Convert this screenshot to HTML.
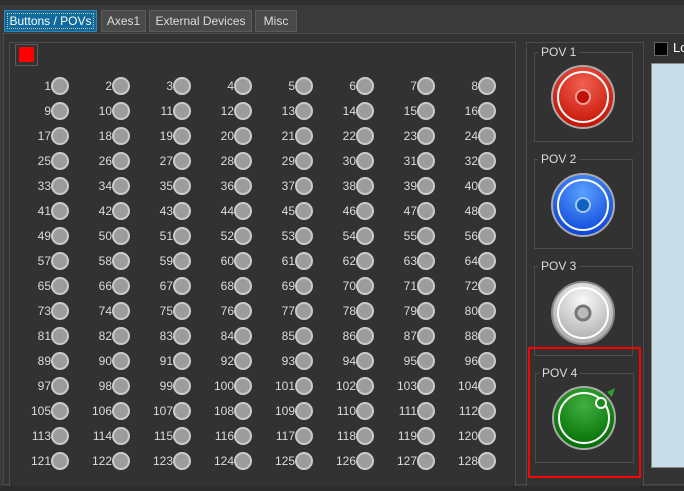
<!DOCTYPE html>
<html><head><style>
body{margin:0;width:684px;height:491px;background:#3a3a3a;overflow:hidden;font-family:"Liberation Sans",sans-serif;font-size:12px;color:#dcdcdc;position:relative}
.a{position:absolute;box-sizing:border-box}
.tab{position:absolute;top:10px;height:22px;background:#4a4a4a;border:1px solid #5a5a5a;color:#ddd;font-size:12px;line-height:20px;text-align:center;box-sizing:border-box;white-space:nowrap}
.grid{position:absolute;left:8px;top:73px;display:grid;grid-template-columns:repeat(8,61px);grid-auto-rows:25px}
.grid span{display:flex;justify-content:flex-end;align-items:center;height:25px}
.grid span:after{content:"";width:14px;height:14px;border-radius:50%;background:#9c9c9c;border:2px solid #cbcbcb}
.pl{position:absolute;font-size:12px;color:#ddd;background:#323232;padding:0 3px}
</style></head><body>
<div class="a" style="left:0;top:0;width:684px;height:5px;background:#2e2e2e"></div>
<div class="tab" style="left:4px;width:93px;background:#0f6aa0;border-color:#2a86c0;color:#fff"><span style="outline:1px dotted #e0c080;padding:0 1px">Buttons / POVs</span></div>
<div class="tab" style="left:101px;width:45px">Axes1</div>
<div class="tab" style="left:149px;width:103px">External Devices</div>
<div class="tab" style="left:255px;width:42px">Misc</div>
<div class="a" style="left:3px;top:33px;width:690px;height:452px;border:1px solid #4a4a4a;background:#333"></div>
<div class="a" style="left:9px;top:42px;width:507px;height:445px;border:1px solid #4c4c4c;background:#323232"></div>
<div class="a" style="left:15px;top:44px;width:23px;height:22px;border:1px solid #5a5a5a"></div>
<div class="a" style="left:19px;top:47px;width:15px;height:15px;background:#f00"></div>
<div class="grid">
<span>1</span><span>2</span><span>3</span><span>4</span><span>5</span><span>6</span><span>7</span><span>8</span>
<span>9</span><span>10</span><span>11</span><span>12</span><span>13</span><span>14</span><span>15</span><span>16</span>
<span>17</span><span>18</span><span>19</span><span>20</span><span>21</span><span>22</span><span>23</span><span>24</span>
<span>25</span><span>26</span><span>27</span><span>28</span><span>29</span><span>30</span><span>31</span><span>32</span>
<span>33</span><span>34</span><span>35</span><span>36</span><span>37</span><span>38</span><span>39</span><span>40</span>
<span>41</span><span>42</span><span>43</span><span>44</span><span>45</span><span>46</span><span>47</span><span>48</span>
<span>49</span><span>50</span><span>51</span><span>52</span><span>53</span><span>54</span><span>55</span><span>56</span>
<span>57</span><span>58</span><span>59</span><span>60</span><span>61</span><span>62</span><span>63</span><span>64</span>
<span>65</span><span>66</span><span>67</span><span>68</span><span>69</span><span>70</span><span>71</span><span>72</span>
<span>73</span><span>74</span><span>75</span><span>76</span><span>77</span><span>78</span><span>79</span><span>80</span>
<span>81</span><span>82</span><span>83</span><span>84</span><span>85</span><span>86</span><span>87</span><span>88</span>
<span>89</span><span>90</span><span>91</span><span>92</span><span>93</span><span>94</span><span>95</span><span>96</span>
<span>97</span><span>98</span><span>99</span><span>100</span><span>101</span><span>102</span><span>103</span><span>104</span>
<span>105</span><span>106</span><span>107</span><span>108</span><span>109</span><span>110</span><span>111</span><span>112</span>
<span>113</span><span>114</span><span>115</span><span>116</span><span>117</span><span>118</span><span>119</span><span>120</span>
<span>121</span><span>122</span><span>123</span><span>124</span><span>125</span><span>126</span><span>127</span><span>128</span>
</div>
<div class="a" style="left:526px;top:42px;width:118px;height:445px;border:1px solid #4c4c4c;background:#323232"></div>
<div class="a" style="left:534px;top:52px;width:99px;height:90px;border:1px solid #4c4c4c"></div>
<div class="pl" style="left:538px;top:45px">POV 1</div>
<div class="a" style="left:534px;top:159px;width:99px;height:90px;border:1px solid #4c4c4c"></div>
<div class="pl" style="left:538px;top:152px">POV 2</div>
<div class="a" style="left:534px;top:266px;width:99px;height:90px;border:1px solid #4c4c4c"></div>
<div class="pl" style="left:538px;top:259px">POV 3</div>
<div class="a" style="left:535px;top:373px;width:99px;height:90px;border:1px solid #4c4c4c"></div>
<div class="pl" style="left:539px;top:366px">POV 4</div>
<div class="a" style="left:528px;top:347px;width:113px;height:131px;border:2px solid #f00"></div>
<svg class="a" style="left:0;top:0" width="684" height="491">
<defs>
<radialGradient id="r" cx=".5" cy=".3" r=".7"><stop offset="0" stop-color="#f06050"/><stop offset="1" stop-color="#c41000"/></radialGradient>
<radialGradient id="b" cx=".5" cy=".3" r=".7"><stop offset="0" stop-color="#5aa0ff"/><stop offset="1" stop-color="#0a44d8"/></radialGradient>
<radialGradient id="w" cx=".5" cy=".3" r=".7"><stop offset="0" stop-color="#fafafa"/><stop offset="1" stop-color="#a8a8a8"/></radialGradient>
<radialGradient id="g" cx=".5" cy=".3" r=".7"><stop offset="0" stop-color="#40b040"/><stop offset="1" stop-color="#006a00"/></radialGradient>
</defs>
<g fill="none">
<circle cx="583" cy="97" r="31" fill="url(#r)" stroke="#aaa" stroke-width="2"/><circle cx="583" cy="97" r="25" stroke="#fff" stroke-width="2"/><circle cx="583" cy="97" r="7" fill="#c01000" stroke="#f4a0a0" stroke-width="2"/>
<circle cx="583" cy="205" r="31" fill="url(#b)" stroke="#aaa" stroke-width="2"/><circle cx="583" cy="205" r="25" stroke="#fff" stroke-width="2"/><circle cx="583" cy="205" r="7" fill="#1060c0" stroke="#a0c8ff" stroke-width="2"/>
<circle cx="583" cy="313" r="31" fill="url(#w)" stroke="#888" stroke-width="2"/><circle cx="583" cy="313" r="25" stroke="#fff" stroke-width="2"/><circle cx="583" cy="313" r="7" fill="#bbb" stroke="#777" stroke-width="3"/>
<circle cx="584" cy="418" r="31" fill="url(#g)" stroke="#aaa" stroke-width="2"/><circle cx="584" cy="418" r="25" stroke="#fff" stroke-width="2"/>
<path d="M607 392 L615 388 L612 397 Z" fill="#30a030"/><circle cx="601" cy="403" r="5" fill="#1a8a1a" stroke="#fff" stroke-width="2"/>
</g></svg>
<div class="a" style="left:654px;top:42px;width:14px;height:14px;background:#000;border:1px solid #666"></div>
<div class="a" style="left:673px;top:40px;color:#fff;font-size:13px">Lo</div>
<div class="a" style="left:651px;top:63px;width:40px;height:405px;background:#c9dde8;border:1px solid #888"></div>
<div class="a" style="left:0;top:486px;width:684px;height:5px;background:#2c2c2c"></div>
</body></html>
